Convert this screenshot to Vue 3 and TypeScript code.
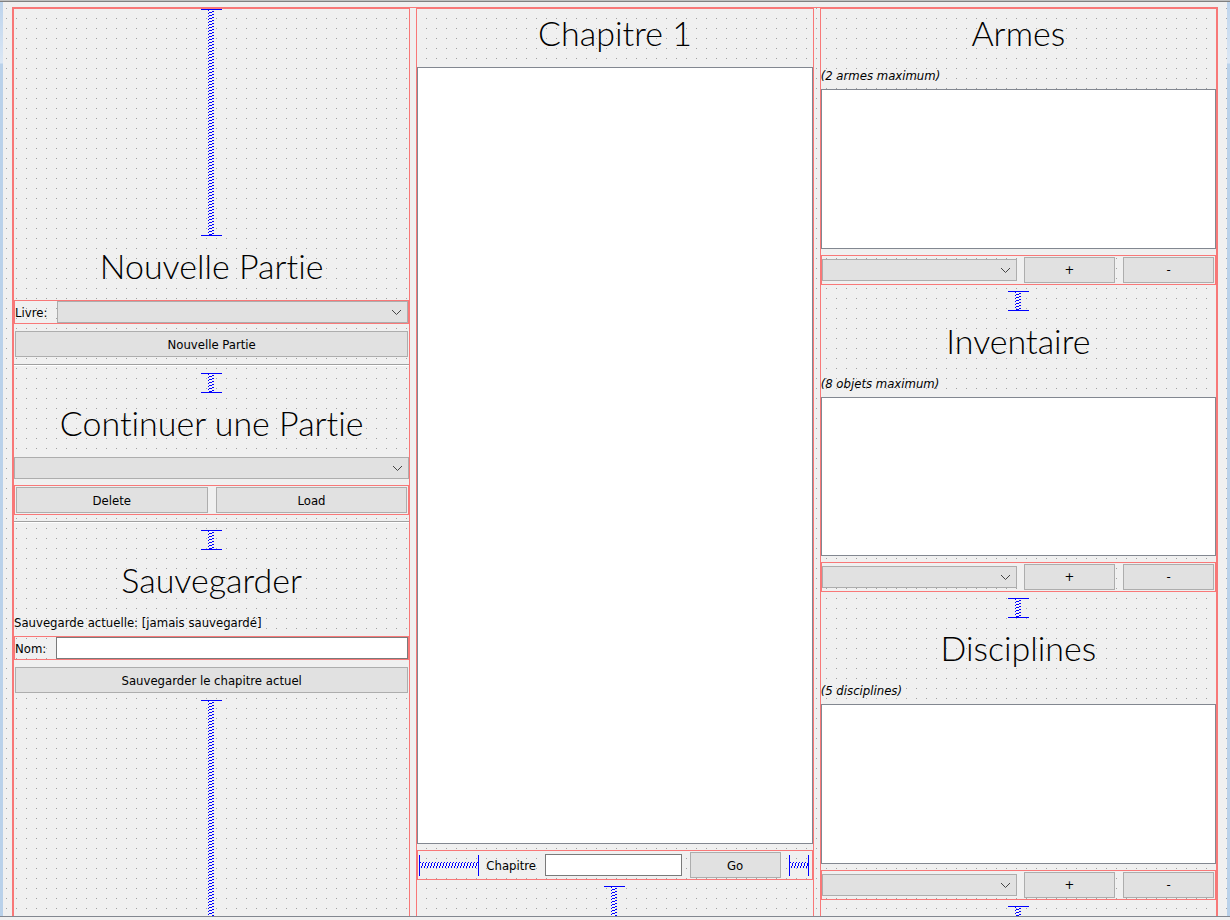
<script setup lang="ts">
import { ref } from 'vue'

interface ItemPanel {
  id: string
  title: string
  hint: string
}

const panels: ItemPanel[] = [
  { id: 'armes', title: 'Armes', hint: '(2 armes maximum)' },
  { id: 'inventaire', title: 'Inventaire', hint: '(8 objets maximum)' },
  { id: 'disciplines', title: 'Disciplines', hint: '(5 disciplines)' },
]

const saveName = ref('')
const chapter = ref('')
</script>

<template>
  <div class="window">
    <svg class="defs" width="0" height="0" aria-hidden="true">
      <defs>
        <pattern id="coil-v" x="7" y="0" width="6" height="3" patternUnits="userSpaceOnUse">
          <path fill="#fff" d="M1 0h2v1h-2zM3 1h1v1h-1z" />
          <path fill="#00f" d="M0 0h1v1h-1zM4 1h2v1h-2zM1 2h3v1h-3z" />
        </pattern>
        <pattern id="coil-h" x="0" y="7" width="3" height="6" patternUnits="userSpaceOnUse">
          <path fill="#fff" d="M0 1h1v2h-1zM1 3h1v1h-1z" />
          <path fill="#00f" d="M0 0h1v1h-1zM1 4h1v2h-1zM2 1h1v3h-1z" />
        </pattern>
      </defs>
    </svg>

    <div class="surface">
      <main class="form">
        <section class="column">
          <svg class="spring-v grow" aria-hidden="true"><rect x="7" width="6" height="100%" fill="url(#coil-v)" /></svg>
          <h1>Nouvelle Partie</h1>
          <div class="row">
            <label class="book-label" for="livre">Livre:</label>
            <div class="combo">
              <select id="livre"></select>
              <svg viewBox="0 0 11 7" aria-hidden="true"><path d="M1 1l4.5 4.5L10 1" /></svg>
            </div>
          </div>
          <button type="button">Nouvelle Partie</button>
          <hr />
          <svg class="spring-v" aria-hidden="true"><rect x="7" width="6" height="100%" fill="url(#coil-v)" /></svg>
          <h1>Continuer une Partie</h1>
          <div class="combo">
            <select aria-label="Continuer une Partie"></select>
            <svg viewBox="0 0 11 7" aria-hidden="true"><path d="M1 1l4.5 4.5L10 1" /></svg>
          </div>
          <div class="row pair">
            <button type="button">Delete</button>
            <button type="button">Load</button>
          </div>
          <hr />
          <svg class="spring-v" aria-hidden="true"><rect x="7" width="6" height="100%" fill="url(#coil-v)" /></svg>
          <h1>Sauvegarder</h1>
          <p>Sauvegarde actuelle: [jamais sauvegardé]</p>
          <div class="row">
            <label class="name-label" for="nom">Nom:</label>
            <input id="nom" v-model="saveName" type="text" />
          </div>
          <button type="button">Sauvegarder le chapitre actuel</button>
          <svg class="spring-v grow" aria-hidden="true"><rect x="7" width="6" height="100%" fill="url(#coil-v)" /></svg>
        </section>

        <section class="column">
          <h1>Chapitre 1</h1>
          <article class="view"></article>
          <div class="row goto">
            <svg class="spring-h long" aria-hidden="true"><rect y="7" width="100%" height="6" fill="url(#coil-h)" /></svg>
            <label class="chapter-label" for="chapitre">Chapitre</label>
            <input id="chapitre" v-model="chapter" type="text" />
            <button class="small" type="button">Go</button>
            <svg class="spring-h" aria-hidden="true"><rect y="7" width="100%" height="6" fill="url(#coil-h)" /></svg>
          </div>
          <svg class="spring-v tail" aria-hidden="true"><rect x="7" width="6" height="100%" fill="url(#coil-v)" /></svg>
        </section>

        <section class="column">
          <template v-for="panel in panels" :key="panel.id">
            <h1>{{ panel.title }}</h1>
            <p class="hint">{{ panel.hint }}</p>
            <ul class="view" :aria-label="panel.title"></ul>
            <div class="row items">
              <div class="combo">
                <select :aria-label="panel.title"></select>
                <svg viewBox="0 0 11 7" aria-hidden="true"><path d="M1 1l4.5 4.5L10 1" /></svg>
              </div>
              <button class="small" type="button">+</button>
              <button class="small" type="button">-</button>
            </div>
            <svg class="spring-v" aria-hidden="true"><rect x="7" width="6" height="100%" fill="url(#coil-v)" /></svg>
          </template>
        </section>
      </main>
    </div>
  </div>
</template>

<style>
body {
  margin: 0;
  background: #f0f0f0;
}
</style>

<style scoped>
* {
  box-sizing: border-box;
}

.window {
  display: flex;
  flex-direction: column;
  height: 100vh;
  padding-bottom: 3px;
  overflow: hidden;
  border-top: 1px solid #c0c0c0;
  background: #f0f0f0;
  color: #000;
  font: 13px/18px "DejaVu Sans Condensed", "DejaVu Sans", sans-serif;
}

.defs {
  position: absolute;
}

.surface {
  flex: 1;
  min-height: 0;
  overflow: hidden;
  padding: 0 3px;
  border-top: 1px solid #808080;
  border-bottom: 1px solid #828790;
  background:
    conic-gradient(at 1px 1px, transparent 75%, #a0a0a0 0) 3px 6px / 10px 10px content-box,
    linear-gradient(#f0f0f0, #f0f0f0) content-box,
    linear-gradient(#bcd3ec, #dbe7f5 61px, #b9d1ea 62px);
}

.form {
  display: grid;
  grid-template-columns: repeat(3, minmax(0, 1fr));
  gap: 6px;
  height: calc(100vh + 1px);
  margin: 5px 9px 0;
  border: 1px solid #f87878;
}

.column {
  display: flex;
  flex-direction: column;
  gap: 6px;
  min-height: 0;
  border: 1px solid #f87878;
}

h1 {
  flex: none;
  height: 52px;
  margin: 0;
  font: 300 34px/48px Lato, sans-serif;
  font-variant-ligatures: none;
  text-align: center;
  white-space: nowrap;
}

p {
  flex: none;
  height: 16px;
  margin: 0;
}

.hint {
  font-style: italic;
}

hr {
  flex: none;
  width: 100%;
  height: 3px;
  margin: 0;
  border: 0;
  border-top: 1px solid #a0a0a0;
  background: linear-gradient(#fff, #fff) 0 0 / 100% 1px no-repeat;
}

.row {
  display: flex;
  flex: none;
  align-items: center;
  gap: 6px;
  border: 1px solid #f87878;
}

label {
  flex: none;
  padding-top: 2px;
}

.book-label {
  width: 36px;
}

.name-label {
  width: 35px;
}

.combo {
  position: relative;
  display: flex;
  flex: 1 1 0;
  min-width: 0;
  height: 22px;
}

.column > .combo {
  flex: none;
}

select,
input {
  flex: 1;
  width: 100%;
  min-width: 0;
  height: 22px;
  margin: 0;
  padding: 0 4px;
  border-radius: 0;
  color: #000;
  font: inherit;
  outline: none;
}

select {
  appearance: none;
  border: 1px solid #adadad;
  background: #e1e1e1;
}

input {
  border: 1px solid #7a7a7a;
  background: #fff;
}

.combo svg {
  position: absolute;
  top: 8px;
  right: 6px;
  width: 11px;
  height: 7px;
  fill: none;
  stroke: #444;
  pointer-events: none;
}

button {
  flex: none;
  height: 26px;
  margin: 1px;
  padding: 2px 0 0;
  border: 1px solid #adadad;
  border-radius: 0;
  background: #e1e1e1;
  color: #000;
  font: inherit;
}

.items button {
  padding: 0;
}

.pair button {
  flex: 1;
}

button.small {
  width: 91px;
}

.goto {
  gap: 7px;
  padding: 0 3px 0 1px;
}

.chapter-label {
  width: 52px;
}

.view {
  flex: 1 1 0;
  min-height: 0;
  margin: 0;
  padding: 0;
  border: 1px solid #828790;
  background: #fff;
  list-style: none;
}

.spring-v {
  flex: none;
  align-self: center;
  width: 21px;
  height: 20px;
  border: solid #00f;
  border-width: 1px 0;
  shape-rendering: crispEdges;
}

.spring-v.grow {
  flex: 1 1 0;
  min-height: 0;
}

.spring-v.tail {
  height: 40px;
}

.spring-h {
  flex: none;
  width: 20px;
  height: 21px;
  border: solid #00f;
  border-width: 0 1px;
  shape-rendering: crispEdges;
}

.spring-h.long {
  width: 60px;
}
</style>
